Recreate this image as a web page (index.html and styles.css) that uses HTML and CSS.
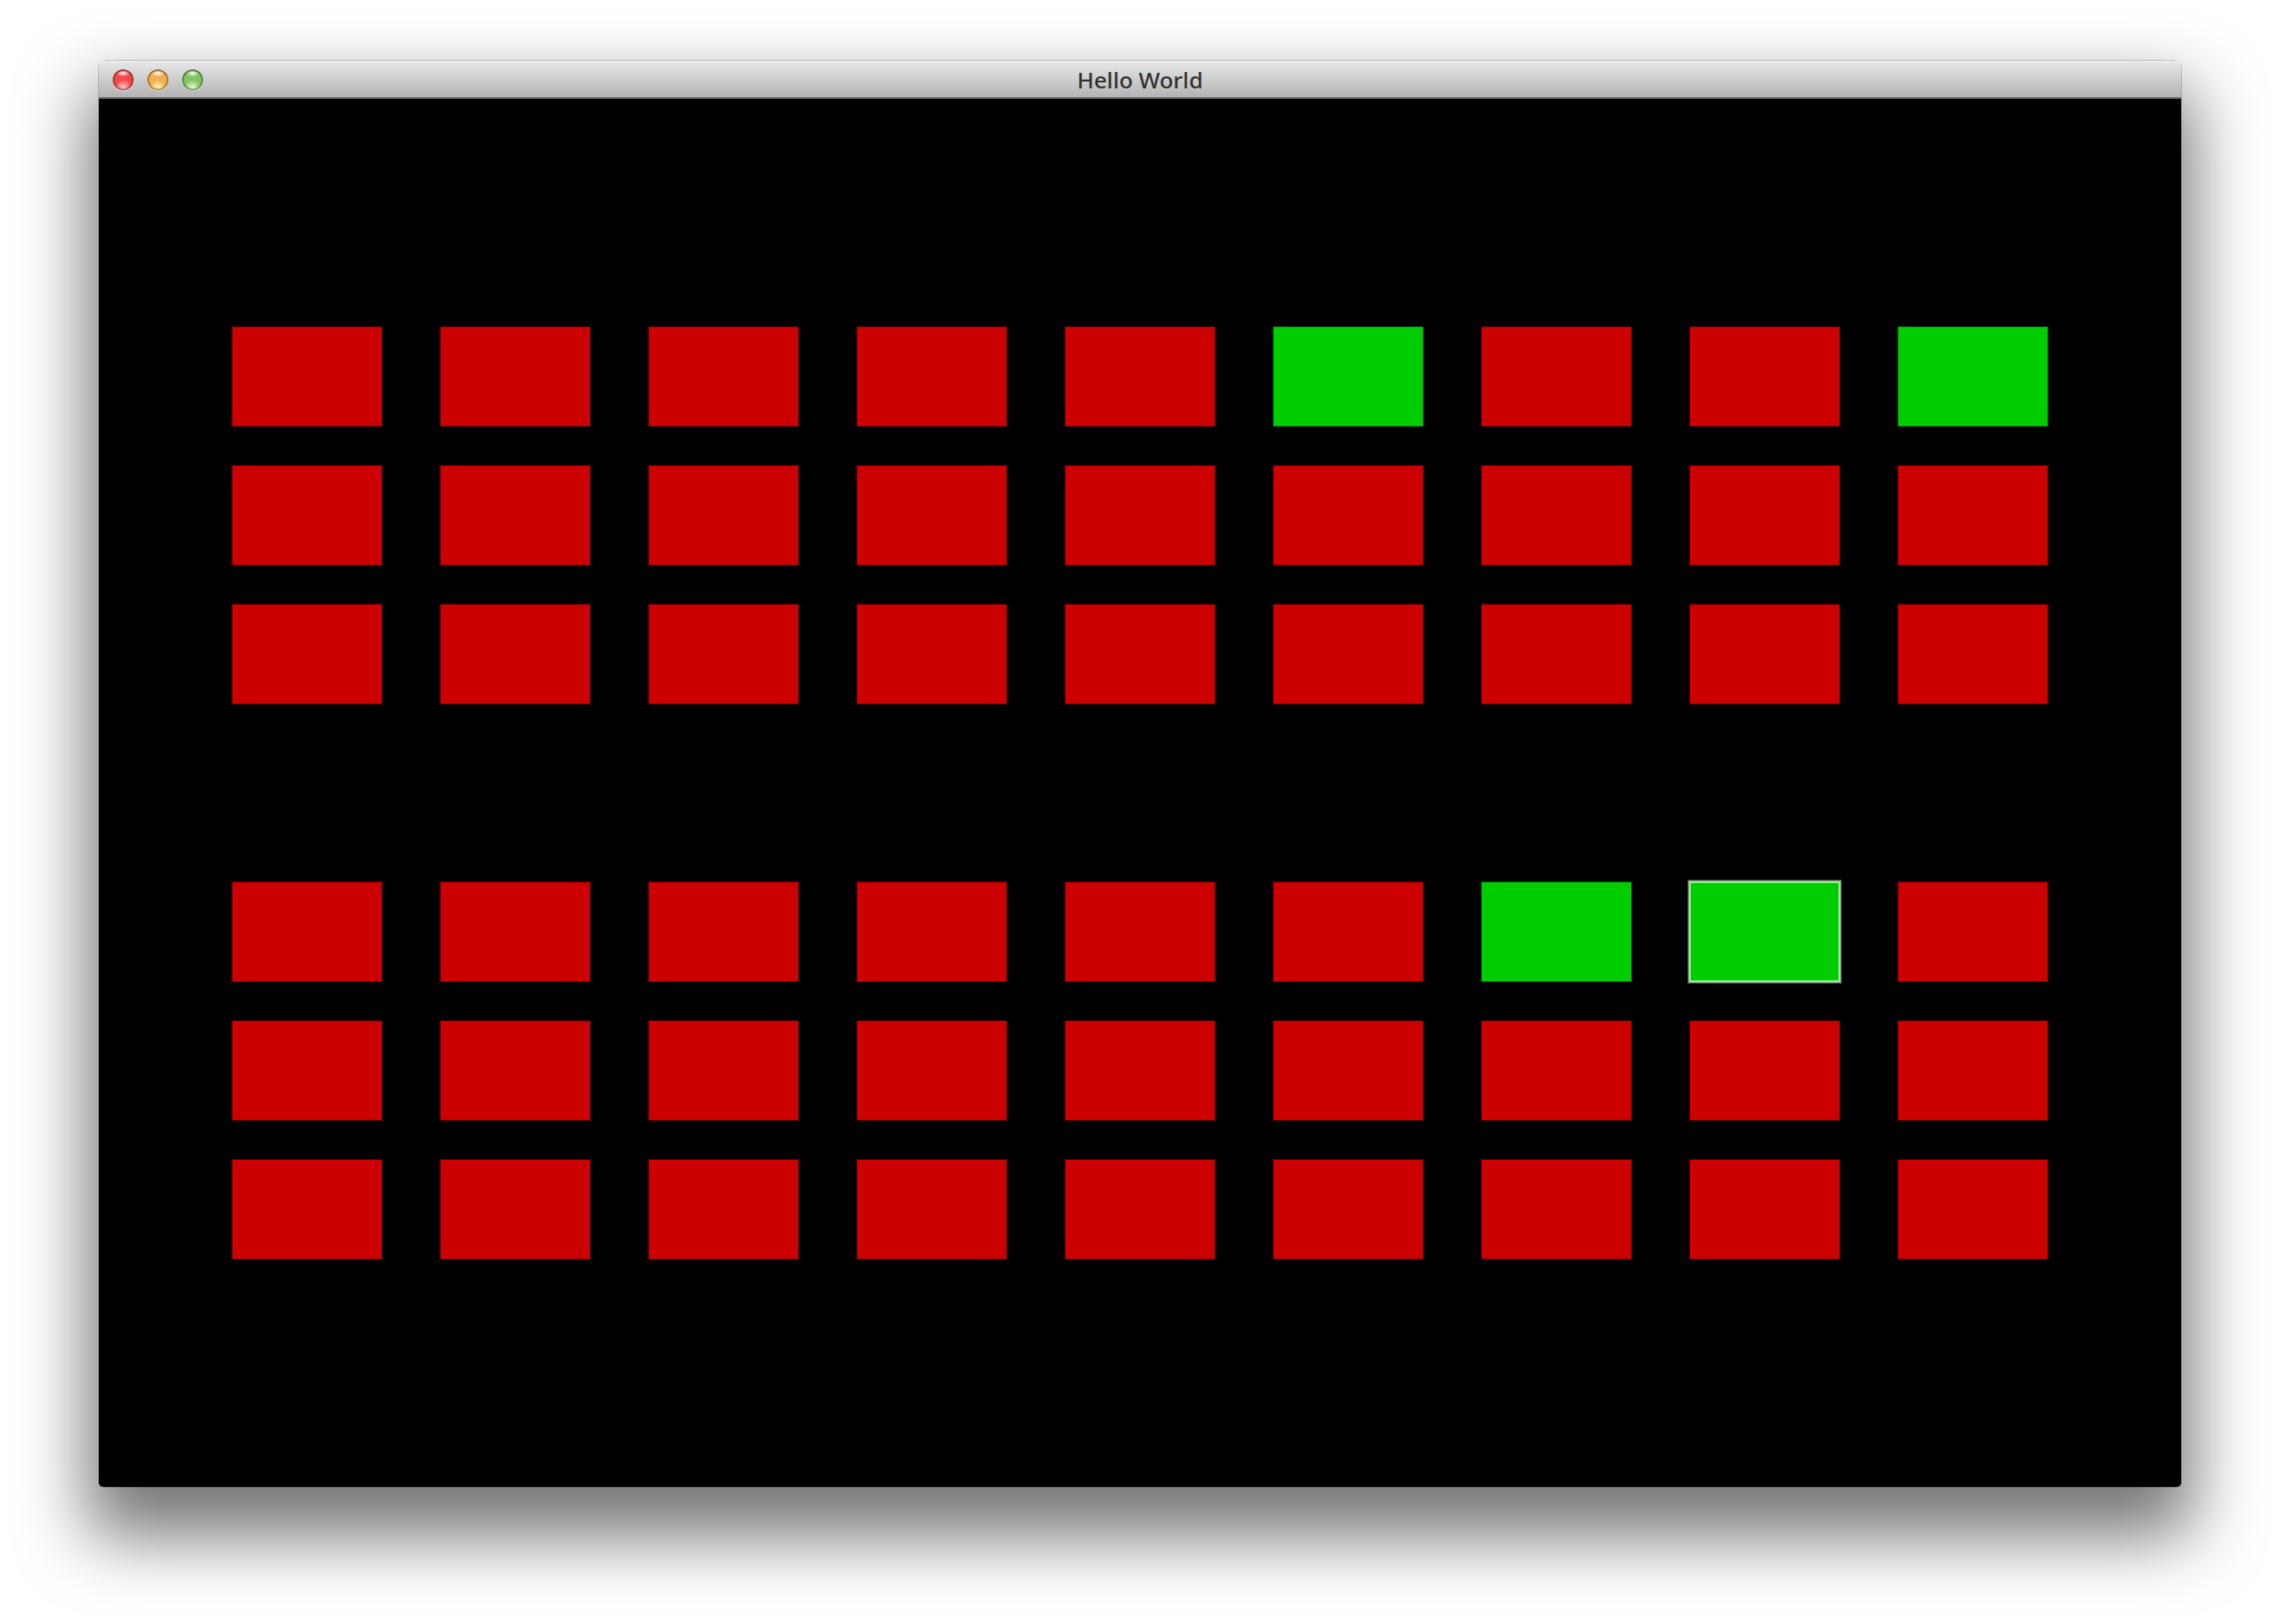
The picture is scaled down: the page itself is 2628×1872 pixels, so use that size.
FILE: index.html
```html
<!DOCTYPE html>
<html lang="en">
<head>
<meta charset="utf-8">
<title>Hello World</title>
<link rel="stylesheet" href="styles.css">
</head>
<body>
<main class="window">
  <header class="titlebar">
    <div class="controls">
      <button class="light light-close" type="button" aria-label="Close"></button>
      <button class="light light-minimize" type="button" aria-label="Minimize"></button>
      <button class="light light-zoom" type="button" aria-label="Zoom"></button>
    </div>
    <h1 class="title">Hello World</h1>
  </header>
  <div class="stage">
    <div class="group">
      <i class="cell"></i><i class="cell"></i><i class="cell"></i><i class="cell"></i><i class="cell"></i><i class="cell on"></i><i class="cell"></i><i class="cell"></i><i class="cell on"></i>
      <i class="cell"></i><i class="cell"></i><i class="cell"></i><i class="cell"></i><i class="cell"></i><i class="cell"></i><i class="cell"></i><i class="cell"></i><i class="cell"></i>
      <i class="cell"></i><i class="cell"></i><i class="cell"></i><i class="cell"></i><i class="cell"></i><i class="cell"></i><i class="cell"></i><i class="cell"></i><i class="cell"></i>
    </div>
    <div class="group">
      <i class="cell"></i><i class="cell"></i><i class="cell"></i><i class="cell"></i><i class="cell"></i><i class="cell"></i><i class="cell on"></i><i class="cell on selected"></i><i class="cell"></i>
      <i class="cell"></i><i class="cell"></i><i class="cell"></i><i class="cell"></i><i class="cell"></i><i class="cell"></i><i class="cell"></i><i class="cell"></i><i class="cell"></i>
      <i class="cell"></i><i class="cell"></i><i class="cell"></i><i class="cell"></i><i class="cell"></i><i class="cell"></i><i class="cell"></i><i class="cell"></i><i class="cell"></i>
    </div>
  </div>
</main>
</body>
</html>
```
FILE: styles.css
```css
* {
  box-sizing: border-box;
}

body {
  margin: 0;
  min-height: 100vh;
  padding: 70px 114px 158px;
  background: #fff;
  font-family: "Noto Sans", "Open Sans", sans-serif;
  display: flex;
}

.window {
  flex: 1;
  display: flex;
  flex-direction: column;
  border-radius: 8px 8px 5px 5px;
  box-shadow: 0 0 0 1px rgba(0, 0, 0, 0.2), 0 44px 80px 13px rgba(0, 0, 0, 0.54);
}

.titlebar {
  display: grid;
  grid-template-columns: 1fr auto 1fr;
  align-items: center;
  height: 44px;
  padding: 2px 16px 0;
  border-bottom: 2px solid #686868;
  border-radius: 8px 8px 0 0;
  background: linear-gradient(#e8e8e8, #b4b4b4);
  box-shadow: inset 0 1px #f6f6f6;
}

.controls {
  display: flex;
  gap: 16px;
}

.light {
  width: 24px;
  height: 24px;
  padding: 0;
  border: 0;
  border-radius: 50%;
}

.light-close {
  background:
    radial-gradient(ellipse 8px 4px at 50% 18%, #fff, rgba(255, 255, 255, 0)),
    radial-gradient(ellipse 10px 9px at 50% 88%, #ffd0d0, rgba(255, 150, 150, 0)),
    #f44a4a;
  box-shadow: inset 0 0 2px 1px #7c1d20, inset 0 1px 2px #8e1c20, 0 1px 1px #ddd;
}

.light-minimize {
  background:
    radial-gradient(ellipse 8px 4px at 50% 18%, #fff, rgba(255, 255, 255, 0)),
    radial-gradient(ellipse 10px 9px at 50% 88%, #fff6b4, rgba(255, 230, 130, 0)),
    #f0b050;
  box-shadow: inset 0 0 2px 1px #80501c, inset 0 1px 2px #935218, 0 1px 1px #ddd;
}

.light-zoom {
  background:
    radial-gradient(ellipse 8px 4px at 50% 18%, #fff, rgba(255, 255, 255, 0)),
    radial-gradient(ellipse 10px 9px at 50% 88%, #e8ffd0, rgba(200, 250, 160, 0)),
    #84c464;
  box-shadow: inset 0 0 2px 1px #356024, inset 0 1px 2px #336420, 0 1px 1px #ddd;
}

.title {
  margin: 0;
  color: #303030;
  font-size: 26px;
  font-weight: 500;
  line-height: 36px;
  text-shadow: 0 1px rgba(255, 255, 255, 0.3);
}

.stage {
  flex: 1;
  display: flex;
  flex-direction: column;
  justify-content: center;
  gap: 204px;
  padding: 0 153px;
  border-radius: 0 0 5px 5px;
  background: #000;
}

.group {
  display: grid;
  grid-template-columns: repeat(9, 1fr);
  gap: 44px 66px;
}

.cell {
  height: 116px;
  border: 1px solid #500000;
  background: #c00;
}

.cell.on {
  border-color: #005000;
  background: #00cd00;
}

.cell.selected {
  border: 2px solid #80ff80;
  box-shadow: 0 0 0 1px #999, 0 0 0 2px #444;
}
```
